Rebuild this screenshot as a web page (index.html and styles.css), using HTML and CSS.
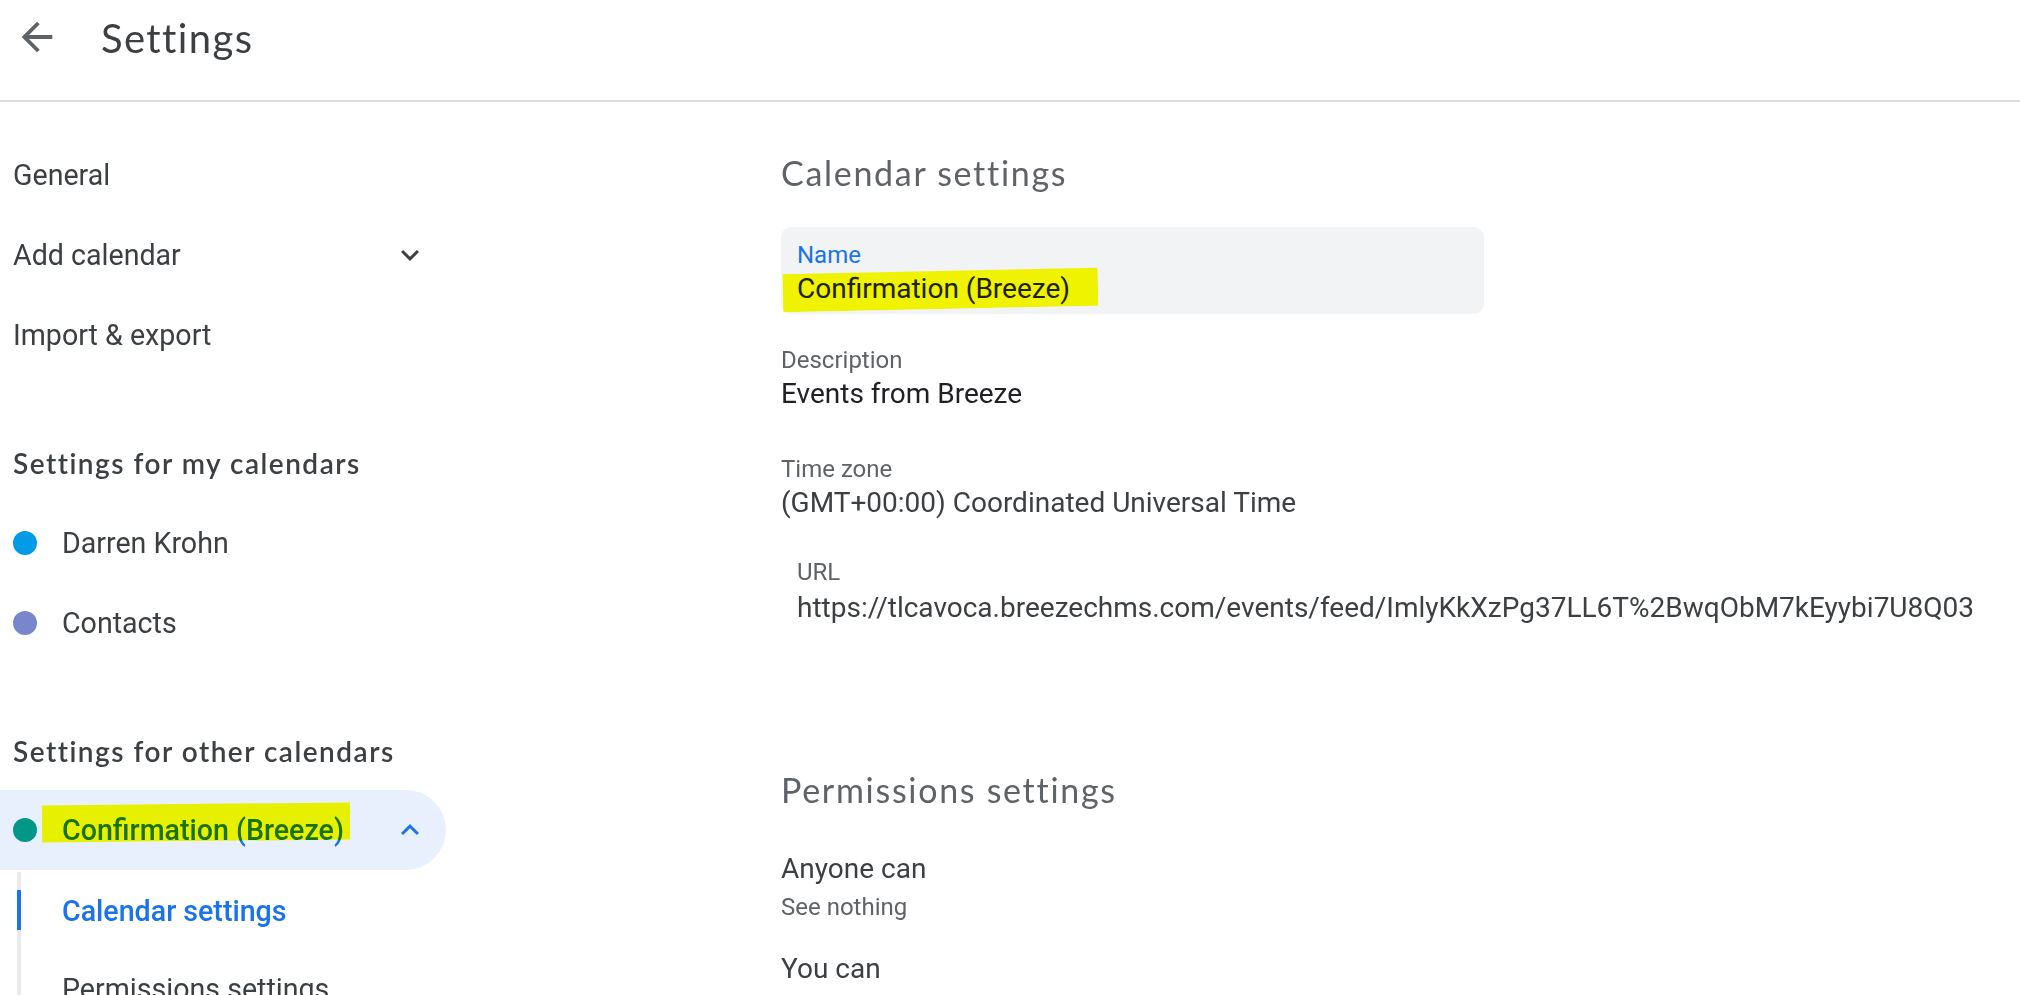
FILE: index.html
```html
<!DOCTYPE html>
<html lang="en">
<head>
    <meta charset="UTF-8">
    <meta name="viewport" content="width=device-width, initial-scale=1.0">
    <title>Settings</title>
    <link rel="stylesheet" href="styles.css">
</head>
<body>
    <header class="topbar">
        <button class="back-btn" aria-label="Back">
            <svg viewBox="0 0 24 24" width="46" height="46"><path d="M20 11H7.83l5.59-5.59L12 4l-8 8 8 8 1.41-1.41L7.83 13H20v-2z"/></svg>
        </button>
        <h1 class="title">Settings</h1>
    </header>

    <div class="layout">
        <nav class="sidenav">
            <a class="nav-item">General</a>
            <a class="nav-item">
                <span class="nav-text">Add calendar</span>
                <svg class="chev" viewBox="0 0 24 24" width="36" height="36"><path d="M16.59 8.59L12 13.17 7.41 8.59 6 10l6 6 6-6z"/></svg>
            </a>
            <a class="nav-item">Import &amp; export</a>

            <div class="nav-heading">Settings for my calendars</div>
            <a class="nav-item"><span class="dot dot-blue"></span>Darren Krohn</a>
            <a class="nav-item"><span class="dot dot-lavender"></span>Contacts</a>

            <div class="nav-heading">Settings for other calendars</div>
            <a class="nav-item cal-open">
                <span class="dot dot-teal"></span>
                <span class="nav-text">Confirmation (Breeze)</span>
                <svg class="chev" viewBox="0 0 24 24" width="36" height="36"><path d="M12 8l-6 6 1.41 1.41L12 10.83l4.59 4.58L18 14z"/></svg>
                <span class="marker marker-nav"></span>
            </a>
            <div class="subnav">
                <a class="sub-item active">Calendar settings</a>
                <a class="sub-item">Permissions settings</a>
            </div>
        </nav>

        <main class="content">
            <h2 class="section-title">Calendar settings</h2>

            <div class="field field-box">
                <div class="label label-focus">Name</div>
                <div class="value">Confirmation (Breeze)</div>
                <span class="marker marker-name"></span>
            </div>

            <div class="field field-desc">
                <div class="label">Description</div>
                <div class="value">Events from Breeze</div>
            </div>

            <div class="field field-tz">
                <div class="label">Time zone</div>
                <div class="value">(GMT+00:00) Coordinated Universal Time</div>
            </div>

            <div class="field field-url">
                <div class="label">URL</div>
                <div class="value value-url">https://tlcavoca.breezechms.com/events/feed/ImlyKkXzPg37LL6T%2BwqObM7kEyybi7U8Q03</div>
            </div>

            <h2 class="section-title perm-title">Permissions settings</h2>

            <div class="perm">
                <div class="value">Anyone can</div>
                <div class="perm-sub">See nothing</div>
            </div>
            <div class="perm perm-you">
                <div class="value">You can</div>
            </div>
        </main>
    </div>
</body>
</html>
```

FILE: styles.css
```css
body {
    margin: 0;
    font-family: Roboto, "Liberation Sans", Arial, sans-serif;
    color: #3c4043;
    background: #fff;
    overflow: hidden;
}
.topbar {
    height: 102px;
    border-bottom: 2px solid #dadce0;
    display: flex;
    align-items: flex-start;
    padding: 14px 0 0 14px;
    box-sizing: border-box;
}
.back-btn {
    width: 46px;
    height: 46px;
    padding: 0;
    border: none;
    background: none;
    fill: #5f6368;
}
.back-btn svg {
    display: block;
}
.title {
    margin: 0 0 0 41px;
    font-family: Lato, "Open Sans", sans-serif;
    font-weight: 400;
    font-size: 40px;
    line-height: 48px;
    letter-spacing: 1.4px;
    color: #3c4043;
}
.layout {
    display: grid;
    grid-template-columns: 446px 1fr;
}

/* left navigation */
.sidenav {
    padding-top: 33px;
}
.nav-item {
    display: flex;
    align-items: center;
    height: 80px;
    padding: 0 18px 0 13px;
    font-size: 28.6px;
    line-height: 80px;
    color: #3c4043;
    position: relative;
}
.nav-text {
    flex: 1;
}
.chev {
    fill: #3c4043;
}
.nav-heading {
    margin-top: 48px;
    height: 80px;
    padding-left: 13px;
    font-family: Lato, "Open Sans", sans-serif;
    font-weight: 600;
    font-size: 28px;
    line-height: 80px;
    letter-spacing: 1.5px;
    color: #3c4043;
}
.dot {
    width: 24px;
    height: 24px;
    border-radius: 50%;
    margin-right: 25px;
    flex: none;
}
.dot-blue { background: #039be5; }
.dot-lavender { background: #7986cb; }
.dot-teal { background: #009688; }
.cal-open {
    margin-top: -1px;
    background: #e8f0fe;
    border-radius: 0 40px 40px 0;
    color: #1a73e8;
    font-weight: 500;
}
.cal-open .chev {
    fill: #1a73e8;
}
.subnav {
    margin: 2px 0 0 17px;
    border-left: 4px solid #e8eaed;
}
.sub-item {
    display: block;
    height: 78px;
    padding-left: 41px;
    font-size: 28.6px;
    line-height: 78px;
    color: #3c4043;
    position: relative;
}
.sub-item.active {
    color: #1a73e8;
    font-weight: 500;
}
.sub-item.active::before {
    content: "";
    position: absolute;
    left: -4px;
    top: 18px;
    width: 4px;
    height: 40px;
    background: #1a73e8;
}

/* yellow marker strokes drawn over the screenshot */
.marker {
    position: absolute;
    background: #fdff00;
    mix-blend-mode: multiply;
    pointer-events: none;
}
.marker-nav {
    left: 42px;
    top: 14px;
    width: 308px;
    height: 37px;
    transform: rotate(-0.6deg);
}
.marker-name {
    left: 2px;
    top: 44px;
    width: 315px;
    height: 38px;
    transform: rotate(-1.2deg);
}

/* main content */
.content {
    padding: 51px 0 0 335px;
}
.section-title {
    margin: 0;
    font-family: Lato, "Open Sans", sans-serif;
    font-weight: 400;
    font-size: 34px;
    line-height: 40px;
    letter-spacing: 1.7px;
    color: #5f6368;
}
.field {
    position: relative;
}
.label {
    font-size: 24px;
    line-height: 32px;
    color: #5f6368;
}
.label-focus {
    color: #1a73e8;
}
.value {
    font-size: 28px;
    line-height: 36px;
    color: #202124;
}
.field-box {
    margin-top: 34px;
    width: 703px;
    box-sizing: border-box;
    padding: 12px 16px 7px;
    background: #f1f3f4;
    border-radius: 10px;
}
.field-desc {
    margin-top: 30px;
}
.field-tz {
    margin-top: 41px;
}
.field-tz .value {
    color: #3c4043;
}
.field-url {
    margin-top: 35px;
    padding-left: 16px;
}
.value-url {
    margin-top: 2px;
    color: #3c4043;
    white-space: nowrap;
}
.perm-title {
    margin-top: 144px;
}
.perm {
    margin-top: 41px;
}
.perm .value {
    color: #3c4043;
}
.perm-sub {
    margin-top: 4px;
    font-size: 24px;
    line-height: 32px;
    color: #5f6368;
}
.perm-you {
    margin-top: 28px;
}
```
